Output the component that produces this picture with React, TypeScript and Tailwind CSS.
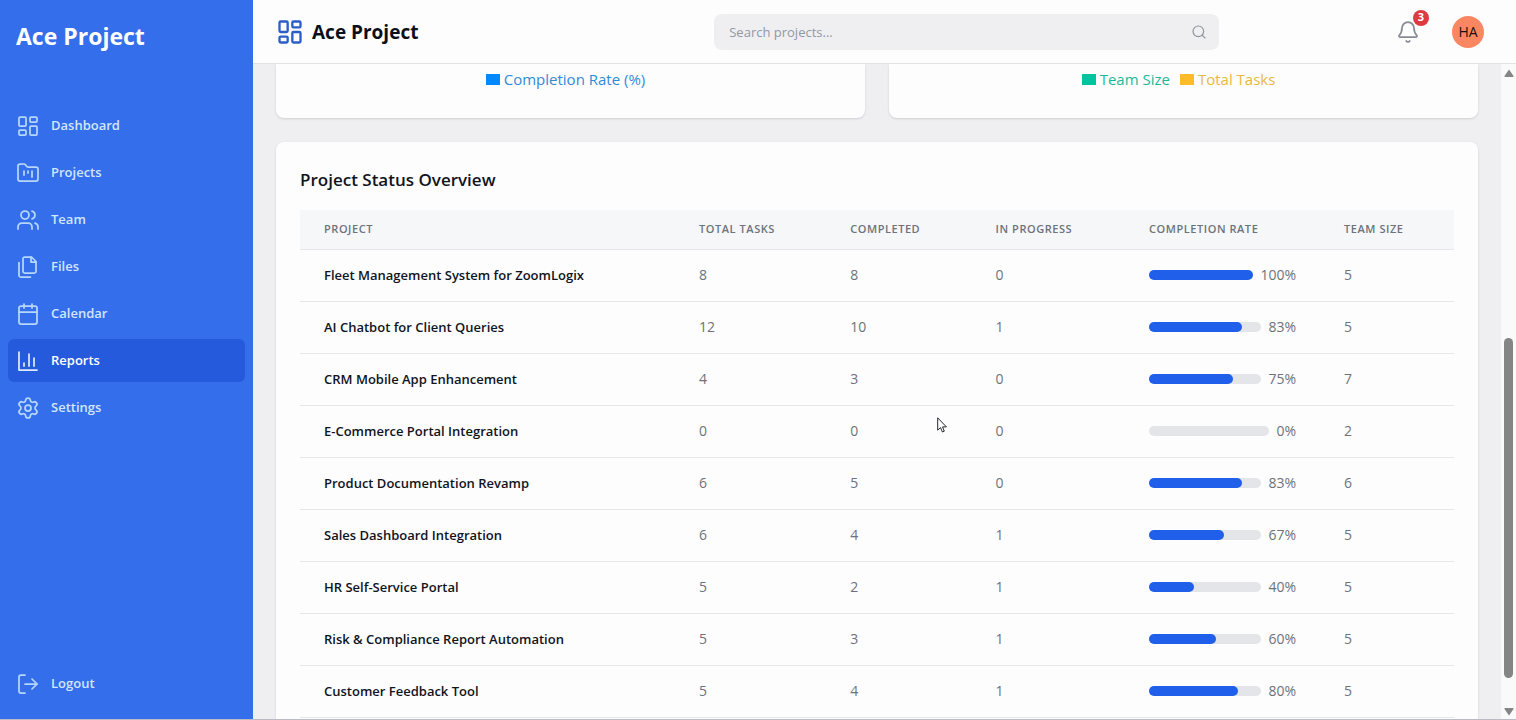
import type { ReactNode } from "react";
import {
  Bell,
  Calendar,
  FolderKanban,
  LayoutDashboard,
  LogOut,
  Search,
  Settings,
  Users,
} from "lucide-react";

interface Project {
  name: string;
  total: number;
  completed: number;
  inProgress: number;
  rate: number;
  team: number;
}

const projects: Project[] = [
  { name: "Fleet Management System for ZoomLogix", total: 8, completed: 8, inProgress: 0, rate: 100, team: 5 },
  { name: "AI Chatbot for Client Queries", total: 12, completed: 10, inProgress: 1, rate: 83, team: 5 },
  { name: "CRM Mobile App Enhancement", total: 4, completed: 3, inProgress: 0, rate: 75, team: 7 },
  { name: "E-Commerce Portal Integration", total: 0, completed: 0, inProgress: 0, rate: 0, team: 2 },
  { name: "Product Documentation Revamp", total: 6, completed: 5, inProgress: 0, rate: 83, team: 6 },
  { name: "Sales Dashboard Integration", total: 6, completed: 4, inProgress: 1, rate: 67, team: 5 },
  { name: "HR Self-Service Portal", total: 5, completed: 2, inProgress: 1, rate: 40, team: 5 },
  { name: "Risk & Compliance Report Automation", total: 5, completed: 3, inProgress: 1, rate: 60, team: 5 },
  { name: "Customer Feedback Tool", total: 5, completed: 4, inProgress: 1, rate: 80, team: 5 },
];

const headings = [
  { label: "Project", width: "w-[32.5%]" },
  { label: "Total Tasks", width: "w-[13.1%]" },
  { label: "Completed", width: "w-[12.6%]" },
  { label: "In Progress", width: "w-[13.3%]" },
  { label: "Completion Rate", width: "w-[16.9%]" },
  { label: "Team Size", width: "w-[11.6%]" },
];

const Icon = ({ children }: { children: ReactNode }) => (
  <svg
    width="24"
    height="24"
    viewBox="0 0 24 24"
    fill="none"
    stroke="currentColor"
    strokeWidth="1.75"
    strokeLinecap="round"
    strokeLinejoin="round"
  >
    {children}
  </svg>
);

const FilesIcon = () => (
  <Icon>
    <path d="M15.5 2H8.6c-.4 0-.8.2-1.1.5-.3.3-.5.7-.5 1.1v12.8c0 .4.2.8.5 1.1.3.3.7.5 1.1.5h9.8c.4 0 .8-.2 1.1-.5.3-.3.5-.7.5-1.1V6.5L15.5 2z" />
    <path d="M3 7.6v12.8c0 .4.2.8.5 1.1.3.3.7.5 1.1.5h9.8" />
    <path d="M15 2v5h5" />
  </Icon>
);

const ReportsIcon = () => (
  <Icon>
    <path d="M3 3v18h18" />
    <path d="M18 17V9" />
    <path d="M13 17V5" />
    <path d="M8 17v-3" />
  </Icon>
);

const NavItem = ({
  icon,
  label,
  active = false,
}: {
  icon: ReactNode;
  label: string;
  active?: boolean;
}) => (
  <a
    href="#"
    className={
      active
        ? "flex h-[43px] items-center gap-[11px] rounded-md bg-[#255adc] px-2 text-[13px] font-semibold text-white"
        : "flex h-[43px] items-center gap-[11px] rounded-md px-2 text-[13px] font-semibold text-[#d3e5fd]"
    }
  >
    <span className={active ? "text-[#dbeafe]" : "text-[#b5d6fd]"}>{icon}</span>
    {label}
  </a>
);

const Sidebar = () => (
  <aside className="flex w-[253px] shrink-0 flex-col bg-[#346eeb]">
    <h1 className="px-4 pt-5 text-[23px] leading-8 font-bold text-white">
      Ace Project
    </h1>
    <nav className="mt-[52px] flex flex-1 flex-col gap-1 px-2">
      <NavItem icon={<LayoutDashboard strokeWidth={1.75} />} label="Dashboard" />
      <NavItem icon={<FolderKanban strokeWidth={1.75} />} label="Projects" />
      <NavItem icon={<Users strokeWidth={1.75} />} label="Team" />
      <NavItem icon={<FilesIcon />} label="Files" />
      <NavItem icon={<Calendar strokeWidth={1.75} />} label="Calendar" />
      <NavItem icon={<ReportsIcon />} label="Reports" active />
      <NavItem icon={<Settings strokeWidth={1.75} />} label="Settings" />
    </nav>
    <div className="px-2 pb-[14px]">
      <NavItem icon={<LogOut strokeWidth={1.75} />} label="Logout" />
    </div>
  </aside>
);

const Header = () => (
  <header className="flex h-16 shrink-0 items-center justify-between border-b border-[#e2e3e6] bg-[#fdfdfd] pr-8 pl-[23px]">
    <div className="flex items-center gap-2">
      <LayoutDashboard size={28} strokeWidth={2} className="text-[#2b5fc7]" />
      <span className="text-[19px] leading-7 font-bold text-[#0b0f19]">
        Ace Project
      </span>
    </div>
    <div className="ml-[119px] flex h-9 w-[41.8%] items-center rounded-lg bg-[#efeff1] pr-3 pl-[15px]">
      <label htmlFor="search" className="sr-only">
        Search projects
      </label>
      <input
        id="search"
        type="text"
        placeholder="Search projects..."
        className="h-full min-w-0 flex-1 bg-transparent text-[13px] leading-6 placeholder-[#9298a3] outline-none"
      />
      <Search size={16} strokeWidth={1.75} className="text-[#8f949d]" />
    </div>
    <div className="flex items-center gap-8">
      <button type="button" aria-label="Notifications" className="relative">
        <Bell size={24} strokeWidth={1.75} className="text-[#868b94]" />
        <span className="absolute -top-[10px] -right-[9px] flex size-4 items-center justify-center rounded-full bg-[#dc3b3f] text-[11px] font-bold text-white">
          3
        </span>
      </button>
      <button
        type="button"
        className="flex size-8 items-center justify-center rounded-full bg-[#fb8762] text-sm text-[#1c0f0c]"
      >
        HA
      </button>
    </div>
  </header>
);

const ProjectRow = ({ project }: { project: Project }) => (
  <tr className="h-[52px] border-b border-[#e6e7ea] text-[#6d727b]">
    <td className="px-6 text-[13px] font-semibold whitespace-nowrap text-[#10141d]">
      {project.name}
    </td>
    <td className="px-6">{project.total}</td>
    <td className="px-6">{project.completed}</td>
    <td className="px-6">{project.inProgress}</td>
    <td className="px-6">
      <div className="flex items-center gap-2">
        <div className="h-[10px] flex-1 rounded-full bg-[#e3e5e9]">
          <div
            className="h-full rounded-full bg-[#205fea]"
            style={{ width: `${project.rate}%` }}
          />
        </div>
        <span>{project.rate}%</span>
      </div>
    </td>
    <td className="px-6">{project.team}</td>
  </tr>
);

const Scrollbar = () => (
  <div className="flex w-[15px] shrink-0 flex-col items-center bg-[#fafafa] pt-[5px] pb-[3px]">
    <svg width="10" height="8" viewBox="0 0 10 8" fill="#858585">
      <path d="M5 0.5 9.5 7Q9.7 8 9 8H1Q.3 8 .5 7Z" />
    </svg>
    <div className="flex w-full flex-1 flex-col items-center">
      <div className="flex-[261]" />
      <div className="w-[9px] flex-[340] rounded-full bg-[#858585]" />
      <div className="flex-[30]" />
    </div>
    <svg width="10" height="8" viewBox="0 0 10 8" fill="#858585">
      <path d="M5 7.5 9.5 1Q9.7 0 9 0H1Q.3 0 .5 1Z" />
    </svg>
  </div>
);

export default function App() {
  return (
    <div className="relative flex h-screen overflow-hidden border-b border-[#b9bcc4] bg-[#efeff1] font-['Open_Sans','Noto_Sans',sans-serif]">
      <Sidebar />
      <div className="flex min-w-0 flex-1 flex-col">
        <Header />
        <div className="flex min-h-0 flex-1">
          <main className="min-w-0 flex-1 overflow-hidden px-[23px]">
            <div className="grid grid-cols-2 gap-6 text-[15px] leading-[30px]">
              <section className="flex h-[54px] items-start justify-center rounded-b-lg bg-[#fdfdfd] pr-[10px] shadow-sm">
                <span className="flex items-center gap-1 text-[#2f8bd8]">
                  <i className="h-[11px] w-[14px] bg-[#0088fe]" />
                  Completion Rate (%)
                </span>
              </section>
              <section className="flex h-[54px] items-start justify-center gap-[10px] rounded-b-lg bg-[#fdfdfd] pr-[10px] shadow-sm">
                <span className="flex items-center gap-1 text-[#1fb897]">
                  <i className="h-[11px] w-[14px] bg-[#00c49f]" />
                  Team Size
                </span>
                <span className="flex items-center gap-1 text-[#e9b840]">
                  <i className="h-[11px] w-[14px] bg-[#ffbb28]" />
                  Total Tasks
                </span>
              </section>
            </div>
            <section className="mt-6 rounded-lg bg-[#fdfdfd] p-6 shadow-sm">
              <h2 className="text-[17px] leading-7 font-semibold text-[#10141d]">
                Project Status Overview
              </h2>
              <table className="mt-4 w-full table-fixed text-left text-sm">
                <thead>
                  <tr className="h-[39px] border-b border-[#e6e7ea] bg-[#f6f7f9]">
                    {headings.map((heading) => (
                      <th
                        key={heading.label}
                        className={`${heading.width} px-6 text-[11px] font-semibold tracking-wider whitespace-nowrap text-[#6d727b] uppercase`}
                      >
                        {heading.label}
                      </th>
                    ))}
                  </tr>
                </thead>
                <tbody>
                  {projects.map((project) => (
                    <ProjectRow key={project.name} project={project} />
                  ))}
                </tbody>
              </table>
            </section>
          </main>
          <Scrollbar />
        </div>
      </div>
      {/* mouse pointer over the table */}
      <svg
        className="absolute top-[417px] left-[937px]"
        width="11"
        height="17"
        viewBox="0 0 11 17"
        fill="#fff"
        stroke="#26282c"
        strokeWidth="1"
        strokeLinejoin="round"
      >
        <path d="M.7.8v12.4l2.8-2.6 1.9 4.4 1.9-.8-1.8-4.3h3.9Z" />
      </svg>
    </div>
  );
}
